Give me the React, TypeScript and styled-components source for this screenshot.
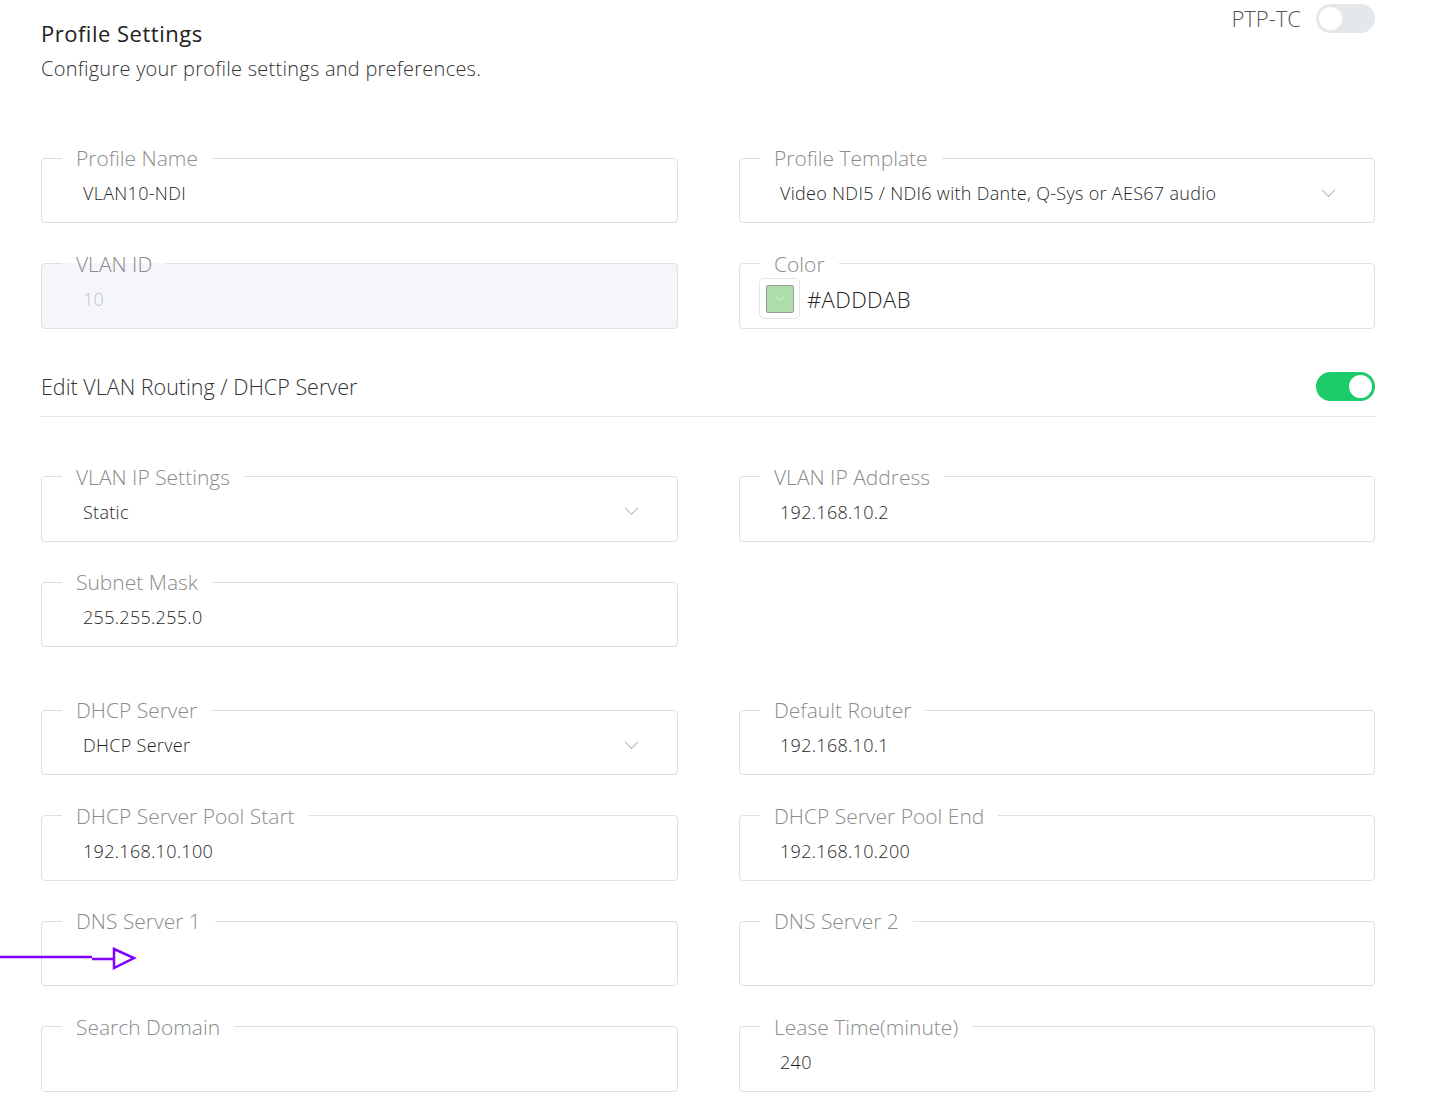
import React from 'react';
import styled, { createGlobalStyle } from 'styled-components';

const GlobalStyle = createGlobalStyle`
  body {
    margin: 0;
    background: #ffffff;
    font-family: 'Open Sans', 'Noto Sans', sans-serif;
    color: #333;
  }
`;

type FieldDef = {
  label: string;
  value?: string;
  select?: boolean;
  disabled?: boolean;
  color?: string;
};

const Page = styled.div`
  position: relative;
  width: 1334px;
  padding: 3px 0 16px 41px;
`;

const Header = styled.div`
  display: flex;
  justify-content: space-between;
  align-items: flex-start;
`;

const TitleBlock = styled.div`
  padding-top: 15px;
`;

const Title = styled.h1`
  margin: 0;
  font-size: 22px;
  line-height: 30px;
  font-weight: 400;
  letter-spacing: 0.5px;
  color: #222;
`;

const Subtitle = styled.p`
  margin: 7px 0 0;
  font-size: 20px;
  line-height: 28px;
  font-weight: 300;
  letter-spacing: 0.25px;
  color: #333;
`;

const PtpBox = styled.div`
  display: flex;
  align-items: center;
  gap: 15px;
  font-size: 22px;
  font-weight: 300;
  color: #555;
`;

const Toggle = styled.div<{ $on?: boolean }>`
  position: relative;
  width: 59px;
  height: 29px;
  border-radius: 15px;
  background: ${(p) => (p.$on ? '#1ccc6a' : '#e4e8eb')};
  &::after {
    content: '';
    position: absolute;
    top: 3px;
    left: ${(p) => (p.$on ? '33px' : '3px')};
    width: 23px;
    height: 23px;
    border-radius: 50%;
    background: #fff;
  }
`;

const Grid = styled.div<{ $top: number }>`
  display: grid;
  grid-template-columns: 637px 636px;
  column-gap: 61px;
  row-gap: 28.5px;
  margin-top: ${(p) => p.$top}px;
`;

const Fieldset = styled.fieldset<{ $disabled?: boolean }>`
  margin: 0;
  padding: 0 0 6px;
  border: 1px solid #dcdfe6;
  border-radius: 4px;
  background: ${(p) => (p.$disabled ? '#f5f6f9' : '#fff')};
  min-width: 0;
`;

const Legend = styled.legend`
  margin-left: 20px;
  padding: 0 14px;
  font-size: 21px;
  line-height: 24px;
  font-weight: 300;
  color: #8c8c8c;
`;

const Value = styled.div<{ $muted?: boolean; $inset: number }>`
  display: flex;
  align-items: center;
  justify-content: space-between;
  height: 46px;
  padding: 0 38px 0 ${(p) => p.$inset}px;
  font-size: 18px;
  font-weight: 300;
  letter-spacing: 0.3px;
  color: ${(p) => (p.$muted ? '#c0c4cc' : '#1f1f1f')};
`;

const ColorRow = styled.div`
  display: flex;
  align-items: center;
  gap: 7px;
  height: 46px;
  padding-left: 19px;
  font-size: 22px;
  font-weight: 300;
  letter-spacing: 0.4px;
  color: #222;
`;

const SwatchFrame = styled.div`
  width: 39px;
  height: 39px;
  border: 1px solid #e3e5ea;
  border-radius: 5px;
  display: flex;
  align-items: center;
  justify-content: center;
`;

const Swatch = styled.div<{ $color: string }>`
  width: 26px;
  height: 26px;
  border: 1px solid #9a9a9a;
  border-radius: 2px;
  background: ${(p) => p.$color};
  display: flex;
  align-items: center;
  justify-content: center;
`;

const SectionRow = styled.div`
  display: flex;
  align-items: center;
  justify-content: space-between;
  margin-top: 43px;
  padding-bottom: 15px;
  border-bottom: 1px solid #e6e6e6;
  font-size: 21.5px;
  font-weight: 300;
  color: #333;
`;

const Arrow = styled.svg`
  position: absolute;
  left: 0;
  top: 946px;
`;

const Chevron = ({ color = '#b0b4bf', size = 15 }: { color?: string; size?: number }) => (
  <svg width={size} height={size * 0.55} viewBox="0 0 16 9" fill="none">
    <path d="M1 1l7 7 7-7" stroke={color} strokeWidth="1.2" />
  </svg>
);

const Field: React.FC<{ f: FieldDef; col: number }> = ({ f, col }) => {
  if (!f.label) return <div />;
  return (
    <Fieldset $disabled={f.disabled}>
      <Legend>{f.label}</Legend>
      {f.color ? (
        <ColorRow>
          <SwatchFrame>
            <Swatch $color={f.color}>
              <Chevron color="#fff" size={9} />
            </Swatch>
          </SwatchFrame>
          {f.value}
        </ColorRow>
      ) : (
        <Value $muted={f.disabled} $inset={col === 0 ? 41 : 40}>
          <span>{f.value}</span>
          {f.select && <Chevron />}
        </Value>
      )}
    </Fieldset>
  );
};

const top: FieldDef[] = [
  { label: 'Profile Name', value: 'VLAN10-NDI' },
  { label: 'Profile Template', value: 'Video NDI5 / NDI6 with Dante, Q-Sys or AES67 audio', select: true },
  { label: 'VLAN ID', value: '10', disabled: true },
  { label: 'Color', value: '#ADDDAB', color: '#ADDDAB' },
];

const ipRows: FieldDef[] = [
  { label: 'VLAN IP Settings', value: 'Static', select: true },
  { label: 'VLAN IP Address', value: '192.168.10.2' },
  { label: 'Subnet Mask', value: '255.255.255.0' },
  { label: '' },
];

const dhcpRows: FieldDef[] = [
  { label: 'DHCP Server', value: 'DHCP Server', select: true },
  { label: 'Default Router', value: '192.168.10.1' },
  { label: 'DHCP Server Pool Start', value: '192.168.10.100' },
  { label: 'DHCP Server Pool End', value: '192.168.10.200' },
  { label: 'DNS Server 1', value: '' },
  { label: 'DNS Server 2', value: '' },
  { label: 'Search Domain', value: '' },
  { label: 'Lease Time(minute)', value: '240' },
];

const App: React.FC = () => (
  <>
    <GlobalStyle />
    <Page>
      <Header>
        <TitleBlock>
          <Title>Profile Settings</Title>
          <Subtitle>Configure your profile settings and preferences.</Subtitle>
        </TitleBlock>
        <PtpBox>
          PTP-TC
          <Toggle />
        </PtpBox>
      </Header>

      <Grid $top={63}>
        {top.map((f, i) => (
          <Field key={i} f={f} col={i % 2} />
        ))}
      </Grid>

      <SectionRow>
        Edit VLAN Routing / DHCP Server
        <Toggle $on />
      </SectionRow>

      <Grid $top={48}>
        {ipRows.map((f, i) => (
          <Field key={i} f={f} col={i % 2} />
        ))}
      </Grid>

      <Grid $top={51}>
        {dhcpRows.map((f, i) => (
          <Field key={i} f={f} col={i % 2} />
        ))}
      </Grid>

      {/* annotation arrow */}
      <Arrow width="140" height="26" viewBox="0 0 140 26" fill="none">
        <path d="M0 11h92M92 13h22" stroke="#7f00ff" strokeWidth="2.5" />
        <path d="M114 3L134 12L114 22Z" stroke="#7f00ff" strokeWidth="2.5" strokeLinejoin="miter" />
      </Arrow>
    </Page>
  </>
);

export default App;
